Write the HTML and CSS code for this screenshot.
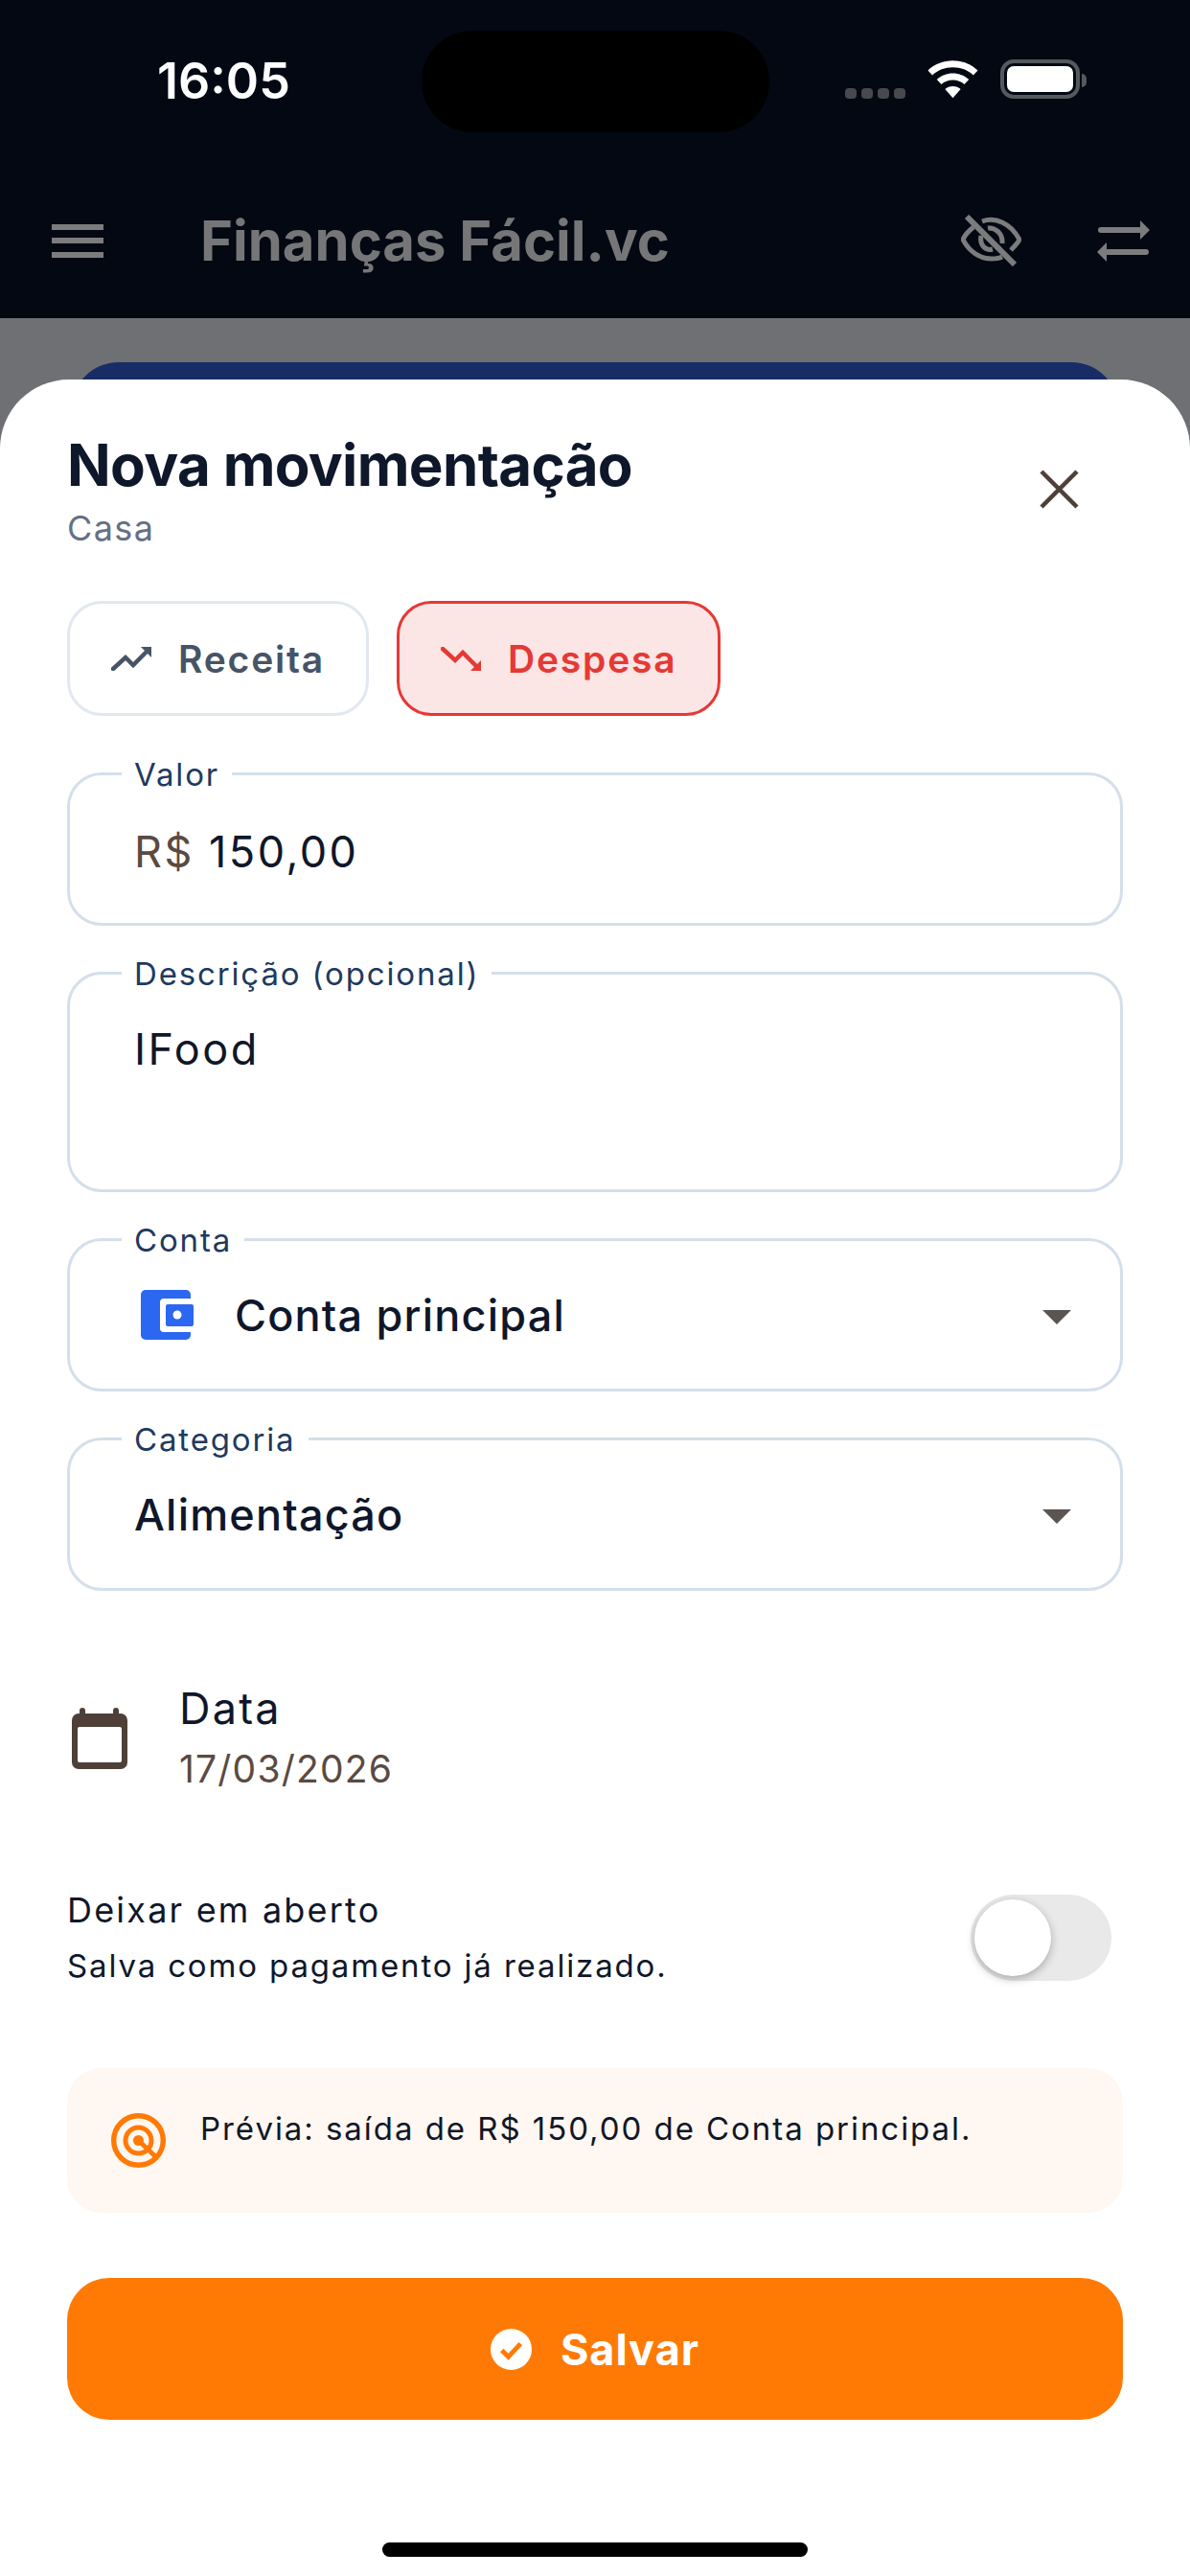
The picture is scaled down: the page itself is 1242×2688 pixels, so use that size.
FILE: index.html
```html
<!DOCTYPE html>
<html lang="pt-BR">

<head>
    <meta charset="UTF-8">
    <meta name="viewport" content="width=device-width, initial-scale=1.0">
    <title>Nova movimentação</title>
    <link rel="stylesheet" href="styles.css">
</head>

<body>
    <div class="screen">
        <header class="topbar">
            <div class="status">
                <span class="time">16:05</span>
                <div class="island"></div>
                <div class="status-icons">
                    <div class="signal"><i></i><i></i><i></i><i></i></div>
                    <svg class="wifi" width="55" height="40" viewBox="0 0 56 40">
                        <path fill="#fff" d="M28 0c10 0 19.500 3.800 26.500 10.300l-4.700 5C44 10 36.400 7 28 7S12 10 6.200 15.300l-4.700-5C8.500 3.800 18 0 28 0z" />
                        <path fill="#fff" d="M28 13.500c6.500 0 12.400 2.400 17 6.500l-4.800 5.100C37 22.200 32.700 20.500 28 20.500s-9 1.700-12.200 4.600L11 20c4.600-4.100 10.500-6.500 17-6.500z" />
                        <path fill="#fff" d="M28 27c3.200 0 6.100 1.200 8.300 3.100L28 39.500l-8.300-9.400C21.900 28.200 24.800 27 28 27z" />
                    </svg>
                    <div class="battery"><div class="battery-fill"></div></div>
                    <div class="battery-cap"></div>
                </div>
            </div>
            <div class="appbar">
                <div class="menu"><i></i><i></i><i></i></div>
                <span class="app-title">Finanças Fácil.vc</span>
                <svg class="eye" width="63" height="54" viewBox="0 0 63 54" fill="none" stroke="#7c7c7e" stroke-width="5">
                    <path d="M22 7C36 2 52 9 61 26C59 30 56 33 52 37" />
                    <path d="M13 13C8 17 4 21 2 26C9 39 20 46 32 46C36 46 40 45.500 43 44" />
                    <path d="M28 14C36 13 44 20 43 30" />
                    <path d="M21 22C19 32 26 38 33 36" />
                    <path d="M6 2L56 52" stroke-width="6" />
                </svg>
                <svg class="swap" width="55" height="43" viewBox="0 0 55 43" fill="#7c7c7e" stroke="none">
                    <rect x="1" y="7" width="46" height="6" rx="3" />
                    <path d="M45 0L55 10L45 20z" />
                    <rect x="8" y="30" width="46" height="6" rx="3" />
                    <path d="M10 23L0 33L10 43z" />
                </svg>
            </div>
        </header>

        <div class="content">
            <div class="back-card"></div>

            <section class="sheet">
                <div class="sheet-head">
                    <div>
                        <h1>Nova movimentação</h1>
                        <p class="subtitle">Casa</p>
                    </div>
                    <svg class="close" width="41" height="41" viewBox="0 0 41 41" stroke="#4e4039" stroke-width="4.500" fill="none">
                        <path d="M2 2l37 37M39 2L2 39" />
                    </svg>
                </div>

                <div class="type-row">
                    <button class="type-btn">
                        <svg width="42" height="25" viewBox="0 0 42 25" fill="none">
                            <path d="M2 23L15 11l8 8L37 5" stroke="#475467" stroke-width="4.500" stroke-linecap="round" />
                            <path d="M31 0h11v11z" fill="#475467" />
                        </svg>
                        Receita
                    </button>
                    <button class="type-btn active">
                        <svg width="42" height="25" viewBox="0 0 42 25" fill="none">
                            <path d="M2 2L15 14l8-8L37 20" stroke="#e53935" stroke-width="4.500" stroke-linecap="round" />
                            <path d="M31 25h11V14z" fill="#e53935" />
                        </svg>
                        Despesa
                    </button>
                </div>

                <div class="field field-value">
                    <span class="field-label">Valor</span>
                    <span class="value"><span class="prefix">R$</span> 150,00</span>
                </div>

                <div class="field field-text">
                    <span class="field-label">Descrição (opcional)</span>
                    <span class="value">IFood</span>
                </div>

                <div class="field">
                    <span class="field-label">Conta</span>
                    <svg class="wallet" width="55" height="52" viewBox="0 0 55 52">
                        <rect width="52" height="52" rx="5" fill="#2b67f0" />
                        <rect x="20" y="9" width="35" height="35" rx="4" fill="#fff" />
                        <rect x="26" y="15" width="29" height="23" rx="2" fill="#2b67f0" />
                        <circle cx="38" cy="26" r="4.500" fill="#fff" />
                    </svg>
                    <span class="value select-value">Conta principal</span>
                    <span class="caret"></span>
                </div>

                <div class="field">
                    <span class="field-label">Categoria</span>
                    <span class="value select-value">Alimentação</span>
                    <span class="caret"></span>
                </div>

                <div class="date-row">
                    <svg width="58" height="64" viewBox="0 0 58 64">
                        <rect y="6" width="58" height="58" rx="7" fill="#4e4039" />
                        <rect x="6" y="20" width="46" height="37" rx="2" fill="#fff" />
                        <rect x="8" width="6" height="10" rx="3" fill="#4e4039" />
                        <rect x="43" width="6" height="10" rx="3" fill="#4e4039" />
                    </svg>
                    <div class="date-text">
                        <span class="date-label">Data</span>
                        <span class="date-value">17/03/2026</span>
                    </div>
                </div>

                <div class="open-row">
                    <div class="open-text">
                        <span class="open-label">Deixar em aberto</span>
                        <span class="open-hint">Salva como pagamento já realizado.</span>
                    </div>
                    <div class="switch"><div class="knob"></div></div>
                </div>

                <div class="preview">
                    <svg width="57" height="57" viewBox="0 0 57 57" fill="none" stroke="#ff7a05">
                        <circle cx="28.500" cy="28.500" r="25.800" stroke-width="5.400" />
                        <circle cx="28.500" cy="28.500" r="13.500" stroke-width="5" />
                        <circle cx="28.500" cy="28.500" r="5.500" fill="#ff7a05" stroke="none" />
                        <path d="M29 29L47 46" stroke-width="5" />
                    </svg>
                    <p>Prévia: saída de R$ 150,00 de Conta principal.</p>
                </div>

                <button class="save">
                    <svg width="43" height="43" viewBox="0 0 44 44">
                        <circle cx="22" cy="22" r="22" fill="#fff" />
                        <path d="M12 23l7 7 13-14" fill="none" stroke="#ff7a05" stroke-width="5" />
                    </svg>
                    Salvar
                </button>

                <div class="home-bar"></div>
            </section>
        </div>
    </div>
</body>

</html>
```

FILE: styles.css
```css
/* Base */
* {
    box-sizing: border-box;
}

body {
    margin: 0;
    padding: 0;
    background-color: #fff;
    font-family: Inter, 'Liberation Sans', sans-serif;
    color: #0f172a;
}

.screen {
    width: 1242px;
    height: 2688px;
    overflow: hidden;
    display: flex;
    flex-direction: column;
}

/* Top bar */
.topbar {
    height: 332px;
    background-color: #030812;
    flex-shrink: 0;
}

.status {
    display: grid;
    grid-template-columns: 440px 363px 1fr;
    height: 170px;
}

.time {
    padding: 57px 0 0 164px;
    font-size: 52px;
    line-height: 56px;
    font-weight: 600;
    color: #fff;
}

.island {
    height: 106px;
    margin-top: 32px;
    border-radius: 53px;
    background-color: #000;
}

.status-icons {
    display: flex;
    align-items: flex-end;
    height: 41px;
    margin-top: 62px;
    padding-left: 79px;
}

.signal {
    display: flex;
    gap: 5px;
    margin-right: 22px;
}

.signal i {
    width: 12px;
    height: 11px;
    border-radius: 4px;
    background-color: #47494e;
}

.wifi {
    margin-right: 22px;
}

.battery {
    width: 83px;
    height: 41px;
    border: 4px solid #55585e;
    border-radius: 14px;
    padding: 3px;
}

.battery-fill {
    height: 100%;
    background-color: #fff;
    border-radius: 7px;
}

.battery-cap {
    width: 5px;
    height: 14px;
    margin-left: 2px;
    margin-bottom: 12px;
    background-color: #55585e;
    border-radius: 0 5px 5px 0;
}

.appbar {
    display: flex;
    align-items: center;
    height: 162px;
    padding: 0 42px 0 54px;
}

.menu {
    display: flex;
    flex-direction: column;
    gap: 8.500px;
    width: 54px;
}

.menu i {
    height: 6px;
    background-color: #7c7c7e;
}

.app-title {
    margin-left: 101px;
    font-size: 58px;
    font-weight: 700;
    color: #767678;
    flex-grow: 1;
}

.swap {
    margin-left: 79px;
}

/* Fondo atenuado */
.content {
    position: relative;
    flex-grow: 1;
    display: flex;
    flex-direction: column;
    padding-top: 64px;
    background-color: #6e7073;
}

.back-card {
    position: absolute;
    left: 74px;
    right: 74px;
    top: 46px;
    height: 120px;
    background-color: #182c66;
    border-radius: 50px 50px 0 0;
}

/* Sheet */
.sheet {
    position: relative;
    flex-grow: 1;
    display: flex;
    flex-direction: column;
    background-color: #fff;
    border-radius: 72px 72px 0 0;
    padding: 53px 70px 0;
}

.sheet-head {
    display: flex;
    justify-content: space-between;
    align-items: flex-start;
}

h1 {
    margin: 0;
    font-size: 60px;
    line-height: 72px;
    font-weight: 700;
    letter-spacing: -0.650px;
}

.subtitle {
    margin: 6px 0 0;
    font-size: 36px;
    line-height: 48px;
    color: #667085;
    letter-spacing: 1.400px;
}

.close {
    margin: 41px 46px 0 0;
}

.type-row {
    display: flex;
    gap: 29px;
    margin-top: 52px;
}

.type-btn {
    display: flex;
    align-items: center;
    justify-content: center;
    gap: 28px;
    height: 120px;
    padding: 0 43px;
    border: 3px solid #e2e8f0;
    border-radius: 36px;
    background-color: #fff;
    font-family: inherit;
    font-size: 39px;
    font-weight: 600;
    letter-spacing: 1.800px;
    color: #475467;
}

.type-btn.active {
    border-color: #e53935;
    background-color: #fbe6e5;
    color: #e53935;
}

/* Campos */
.field {
    position: relative;
    display: flex;
    align-items: center;
    height: 160px;
    margin-top: 48px;
    padding: 2px 67px 0;
    border: 3px solid #d5dfeb;
    border-radius: 36px;
}

.field-value {
    margin-top: 59px;
    padding-top: 5px;
}

.field-text {
    height: 230px;
    align-items: flex-start;
    padding-top: 49px;
}

.field-label {
    position: absolute;
    left: 54px;
    top: -17px;
    padding: 0 13px;
    background-color: #fff;
    font-size: 33px;
    line-height: 32px;
    letter-spacing: 1.850px;
    color: #1e3a5f;
}

.value {
    font-size: 45px;
    line-height: 58px;
    letter-spacing: 2.500px;
    color: #0f172a;
}

.prefix {
    color: #5b4a41;
}

.select-value {
    font-size: 45px;
    font-weight: 500;
    letter-spacing: 1.200px;
}

.wallet {
    margin-left: 7px;
    margin-right: 43px;
    margin-top: -2px;
}

.caret {
    position: absolute;
    right: 51px;
    top: 72px;
    width: 0;
    height: 0;
    border-left: 15px solid transparent;
    border-right: 15px solid transparent;
    border-top: 15px solid #5b5552;
}

/* Data */
.date-row {
    display: flex;
    align-items: center;
    gap: 54px;
    margin-top: 91px;
    padding-left: 5px;
}

.date-text {
    display: flex;
    flex-direction: column;
}

.date-label {
    font-size: 45px;
    line-height: 63px;
    letter-spacing: 2.200px;
}

.date-value {
    font-size: 39px;
    line-height: 63px;
    letter-spacing: 1.200px;
    color: #5b4a41;
}

/* Deixar em aberto */
.open-row {
    display: flex;
    justify-content: space-between;
    align-items: center;
    margin-top: 93px;
}

.open-text {
    display: flex;
    flex-direction: column;
    gap: 12px;
}

.open-label {
    font-size: 36px;
    line-height: 46px;
    letter-spacing: 2.200px;
}

.open-hint {
    font-size: 33px;
    line-height: 46px;
    letter-spacing: 1.850px;
}

.switch {
    width: 147px;
    height: 90px;
    margin-right: 12px;
    border-radius: 45px;
    background-color: #e9e9e9;
    padding: 5px 4px;
}

.knob {
    width: 80px;
    height: 80px;
    border-radius: 50%;
    background-color: #fff;
    box-shadow: 0 3px 10px rgba(0, 0, 0, 0.28);
}

/* Previa */
.preview {
    display: flex;
    align-items: flex-start;
    gap: 36px;
    height: 151px;
    margin-top: 84px;
    padding: 47px 46px 0;
    background-color: #fff7f1;
    border-radius: 36px;
}

.preview p {
    margin: -8px 0 0;
    font-size: 33px;
    line-height: 48px;
    letter-spacing: 1.950px;
}

/* Boton */
.save {
    display: flex;
    align-items: center;
    justify-content: center;
    gap: 30px;
    flex-shrink: 0;
    width: 100%;
    height: 148px;
    margin-top: 68px;
    border: none;
    border-radius: 44px;
    background-color: #ff7a05;
    color: #fff;
    font-family: inherit;
    font-size: 45px;
    font-weight: 700;
    letter-spacing: 1px;
}

.home-bar {
    align-self: center;
    width: 444px;
    height: 15px;
    margin-top: auto;
    margin-bottom: 20px;
    border-radius: 8px;
    background-color: #000;
}
```
